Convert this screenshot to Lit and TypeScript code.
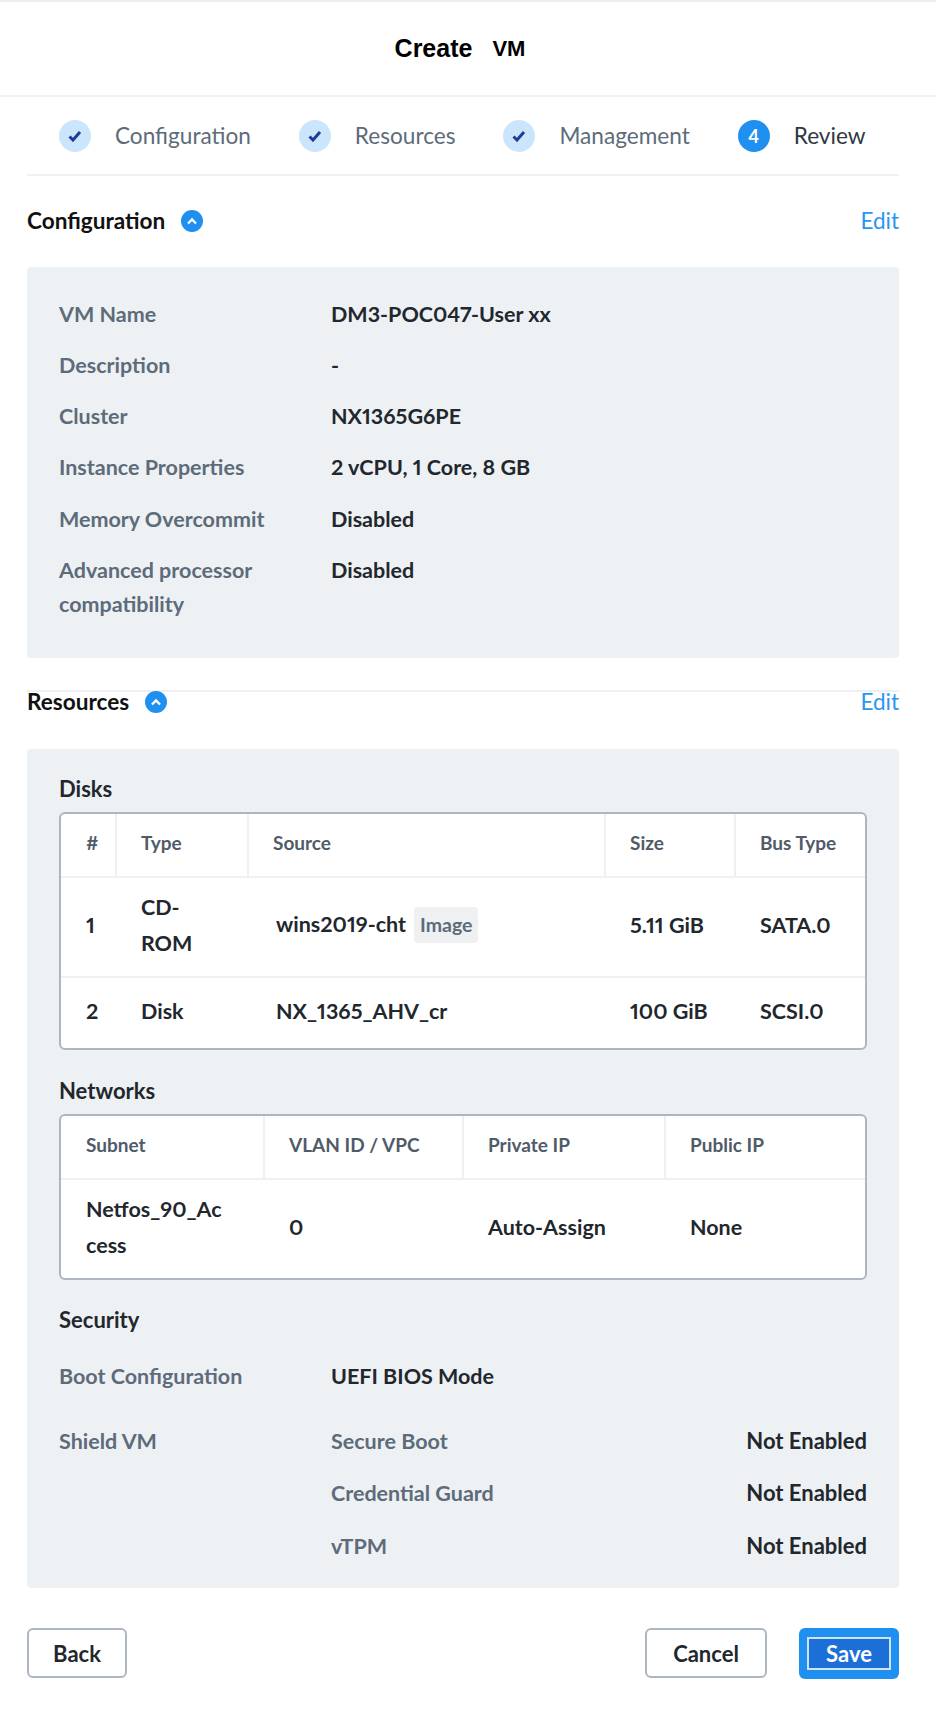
import { LitElement, html, css } from "lit";
import { customElement } from "lit/decorators.js";

const check = html`<svg width="14" height="12" viewBox="0 0 14 12"><path d="M1.5 6.5 5 10l7-8" fill="none" stroke="#1c3f94" stroke-width="3"/></svg>`;
const chev = html`<svg width="10" height="8" viewBox="0 0 10 8"><path d="M1 6.5 5 2.5l4 4" fill="none" stroke="#fff" stroke-width="2.4"/></svg>`;

@customElement("app-root")
export class AppRoot extends LitElement {
  static styles = css`
    :host { display: block; width: 936px; height: 1724px; background: #fff; font-family: Lato, "Liberation Sans", sans-serif; font-size: 21px; color: #22272e; overflow: hidden; font-variant-numeric: proportional-nums lining-nums; }
    .top { border-top: 2px solid #eceef1; border-bottom: 2px solid #eef0f2; box-sizing: border-box; height: 97px; display: flex; align-items: center; justify-content: center; font-family: "Liberation Sans", sans-serif; font-weight: 700; font-size: 25px; color: #000; gap: 20px; padding: 0 16px 0 0; }
    .top span + span { font-size: 22px; }
    .body { padding: 0 37px 0 27px; }
    .steps { height: 79px; box-sizing: border-box; border-bottom: 2px solid #eef0f3; display: flex; align-items: center; padding-left: 32px; }
    .step { display: flex; align-items: center; gap: 24px; color: #5d6b7a; font-size: 22.6px; }
    .step.a { margin-right: 48px; }
    .step.cur { color: #2f3742; }
    .circle { width: 32px; height: 32px; border-radius: 50%; background: #cbe6fc; display: flex; align-items: center; justify-content: center; }
    .circle.cur { background: #1f90f0; color: #fff; font-weight: 700; font-size: 18px; }
    .sec { display: flex; align-items: center; font-weight: 700; font-size: 22.6px; color: #111; }
    .sec .ico { width: 22px; height: 22px; border-radius: 50%; background: #1f90f0; display: flex; align-items: center; justify-content: center; margin-left: 16px; }
    .sec a { margin-left: auto; color: #2a96f0; font-weight: 400; font-size: 22.5px; }
    .s1 { height: 91px; padding-bottom: 2px; box-sizing: border-box; }
    .s2 { border-top: 2px solid #eef0f3; margin-top: 32px; box-sizing: border-box; height: 59px; padding-bottom: 38px; }
    .panel { background: #eef1f4; border-radius: 4px; padding: 0 32px; }
    .p1 { height: 391px; box-sizing: border-box; padding-top: 21.5px; }
    .kv { display: grid; grid-template-columns: 272px 1fr; line-height: 34px; padding: 8px 0 9.3px; font-weight: 700; color: #22272e; font-size: 21.5px; }
    .kv .k { color: #5d6b7a; }
    .p2 { height: 839px; box-sizing: border-box; padding-top: 23px; }
    h4 { margin: 0 0 6px; font-size: 22px; line-height: 34px; font-weight: 700; color: #22272e; }
    table + h4 { margin-top: 24px; }
    table { width: 100%; border-collapse: separate; border-spacing: 0; background: #fff; border: 2px solid #aeb6c0; border-radius: 6px; table-layout: fixed; font-weight: 700; font-size: 21.5px; }
    th, td { text-align: left; padding: 0 0 0 24px; border-bottom: 2px solid #eef0f3; box-sizing: border-box; }
    th:first-child { padding-left: 25px; }
    td:first-child { padding-left: 25px; }
    th { height: 64px; padding-bottom: 5px; font-size: 19px; font-weight: 700; color: #4f5b69; border-right: 2px solid #eef0f3; }
    th:last-child { border-right: 0; }
    tr:last-child td { border-bottom: 0; }
    td { line-height: 36px; color: #22272e; padding-bottom: 5px; }
    .r2 td { height: 100px; }
    .r3 td { height: 98px; }
    .r1 td { height: 70px; }
    td.sv { padding-left: 27px; }
    .badge { display: inline-block; background: #eef0f2; border-radius: 4px; padding: 0 6px; font-size: 19.5px; color: #5d6b7a; margin-left: 8px; }
    .g { display: grid; grid-template-columns: 272px 1fr auto; font-weight: 700; color: #22272e; font-size: 21.5px; margin-top: 22px; row-gap: 18.5px; }
    .g .k { color: #5d6b7a; }
    .g > div { line-height: 34px; }
    .g .v { font-size: 22px; }
    .g .boot { margin-bottom: 12px; }
    .foot { display: flex; align-items: flex-start; gap: 32px; padding-top: 40px; }
    button { font: 700 22px Lato, sans-serif; height: 50px; background: #fff; border: 2px solid #aeb6c0; border-radius: 6px; color: #22272e; padding: 0; }
    .back { width: 100px; }
    .cancel { width: 122px; }
    .sp { flex: 1; }
    .save { background: #1f90f0; border: 0; color: #fff; width: 100px; height: 51px; display: flex; align-items: center; justify-content: center; }
    .save span { display: block; box-sizing: border-box; width: 84px; height: 33px; background: #1b6fd6; border: 2px solid #cfe3fb; line-height: 29px; }
    .sec2 { margin-top: 23px !important; }
  `;
  render() {
    const step = (t: string, a = true) => html`<div class="step ${a ? "a" : "cur"}"><div class="circle ${a ? "" : "cur"}">${a ? check : "4"}</div>${t}</div>`;
    const kv = (k: any, v: string) => html`<div class="kv"><div class="k">${k}</div><div>${v}</div></div>`;
    return html`
      <div class="top"><span>Create</span><span>VM</span></div>
      <div class="body">
        <div class="steps">${step("Configuration")}${step("Resources")}${step("Management")}${step("Review", false)}</div>
        <div class="sec s1">Configuration<div class="ico">${chev}</div><a>Edit</a></div>
        <div class="panel p1">
          ${kv("VM Name", "DM3-POC047-User xx")}${kv("Description", "-")}${kv("Cluster", "NX1365G6PE")}${kv("Instance Properties", "2 vCPU, 1 Core, 8 GB")}${kv("Memory Overcommit", "Disabled")}${kv(html`Advanced processor<br />compatibility`, "Disabled")}
        </div>
        <div class="sec s2">Resources<div class="ico">${chev}</div><a>Edit</a></div>
        <div class="panel p2">
          <h4>Disks</h4>
          <table>
            <colgroup><col style="width:56px" /><col style="width:132px" /><col style="width:357px" /><col style="width:130px" /><col /></colgroup>
            <tr><th>#</th><th>Type</th><th>Source</th><th>Size</th><th>Bus Type</th></tr>
            <tr class="r2"><td>1</td><td>CD-<br />ROM</td><td class="sv">wins2019-cht<span class="badge">Image</span></td><td>5.11 GiB</td><td>SATA.0</td></tr>
            <tr class="r1"><td>2</td><td>Disk</td><td class="sv">NX_1365_AHV_cr</td><td>100 GiB</td><td>SCSI.0</td></tr>
          </table>
          <h4>Networks</h4>
          <table>
            <colgroup><col style="width:204px" /><col style="width:199px" /><col style="width:202px" /><col /></colgroup>
            <tr><th>Subnet</th><th>VLAN ID / VPC</th><th>Private IP</th><th>Public IP</th></tr>
            <tr class="r3"><td>Netfos_90_Ac<br />cess</td><td>0</td><td>Auto-Assign</td><td>None</td></tr>
          </table>
          <h4 class="sec2">Security</h4>
          <div class="g">
            <div class="k boot">Boot Configuration</div><div class="boot">UEFI BIOS Mode</div><div class="boot"></div>
            <div class="k">Shield VM</div><div class="k">Secure Boot</div><div class="v">Not Enabled</div>
            <div></div><div class="k">Credential Guard</div><div class="v">Not Enabled</div>
            <div></div><div class="k">vTPM</div><div class="v">Not Enabled</div>
          </div>
        </div>
        <div class="foot">
          <button class="back">Back</button><div class="sp"></div>
          <button class="cancel">Cancel</button>
          <button class="save"><span>Save</span></button>
        </div>
      </div>
    `;
  }
}
